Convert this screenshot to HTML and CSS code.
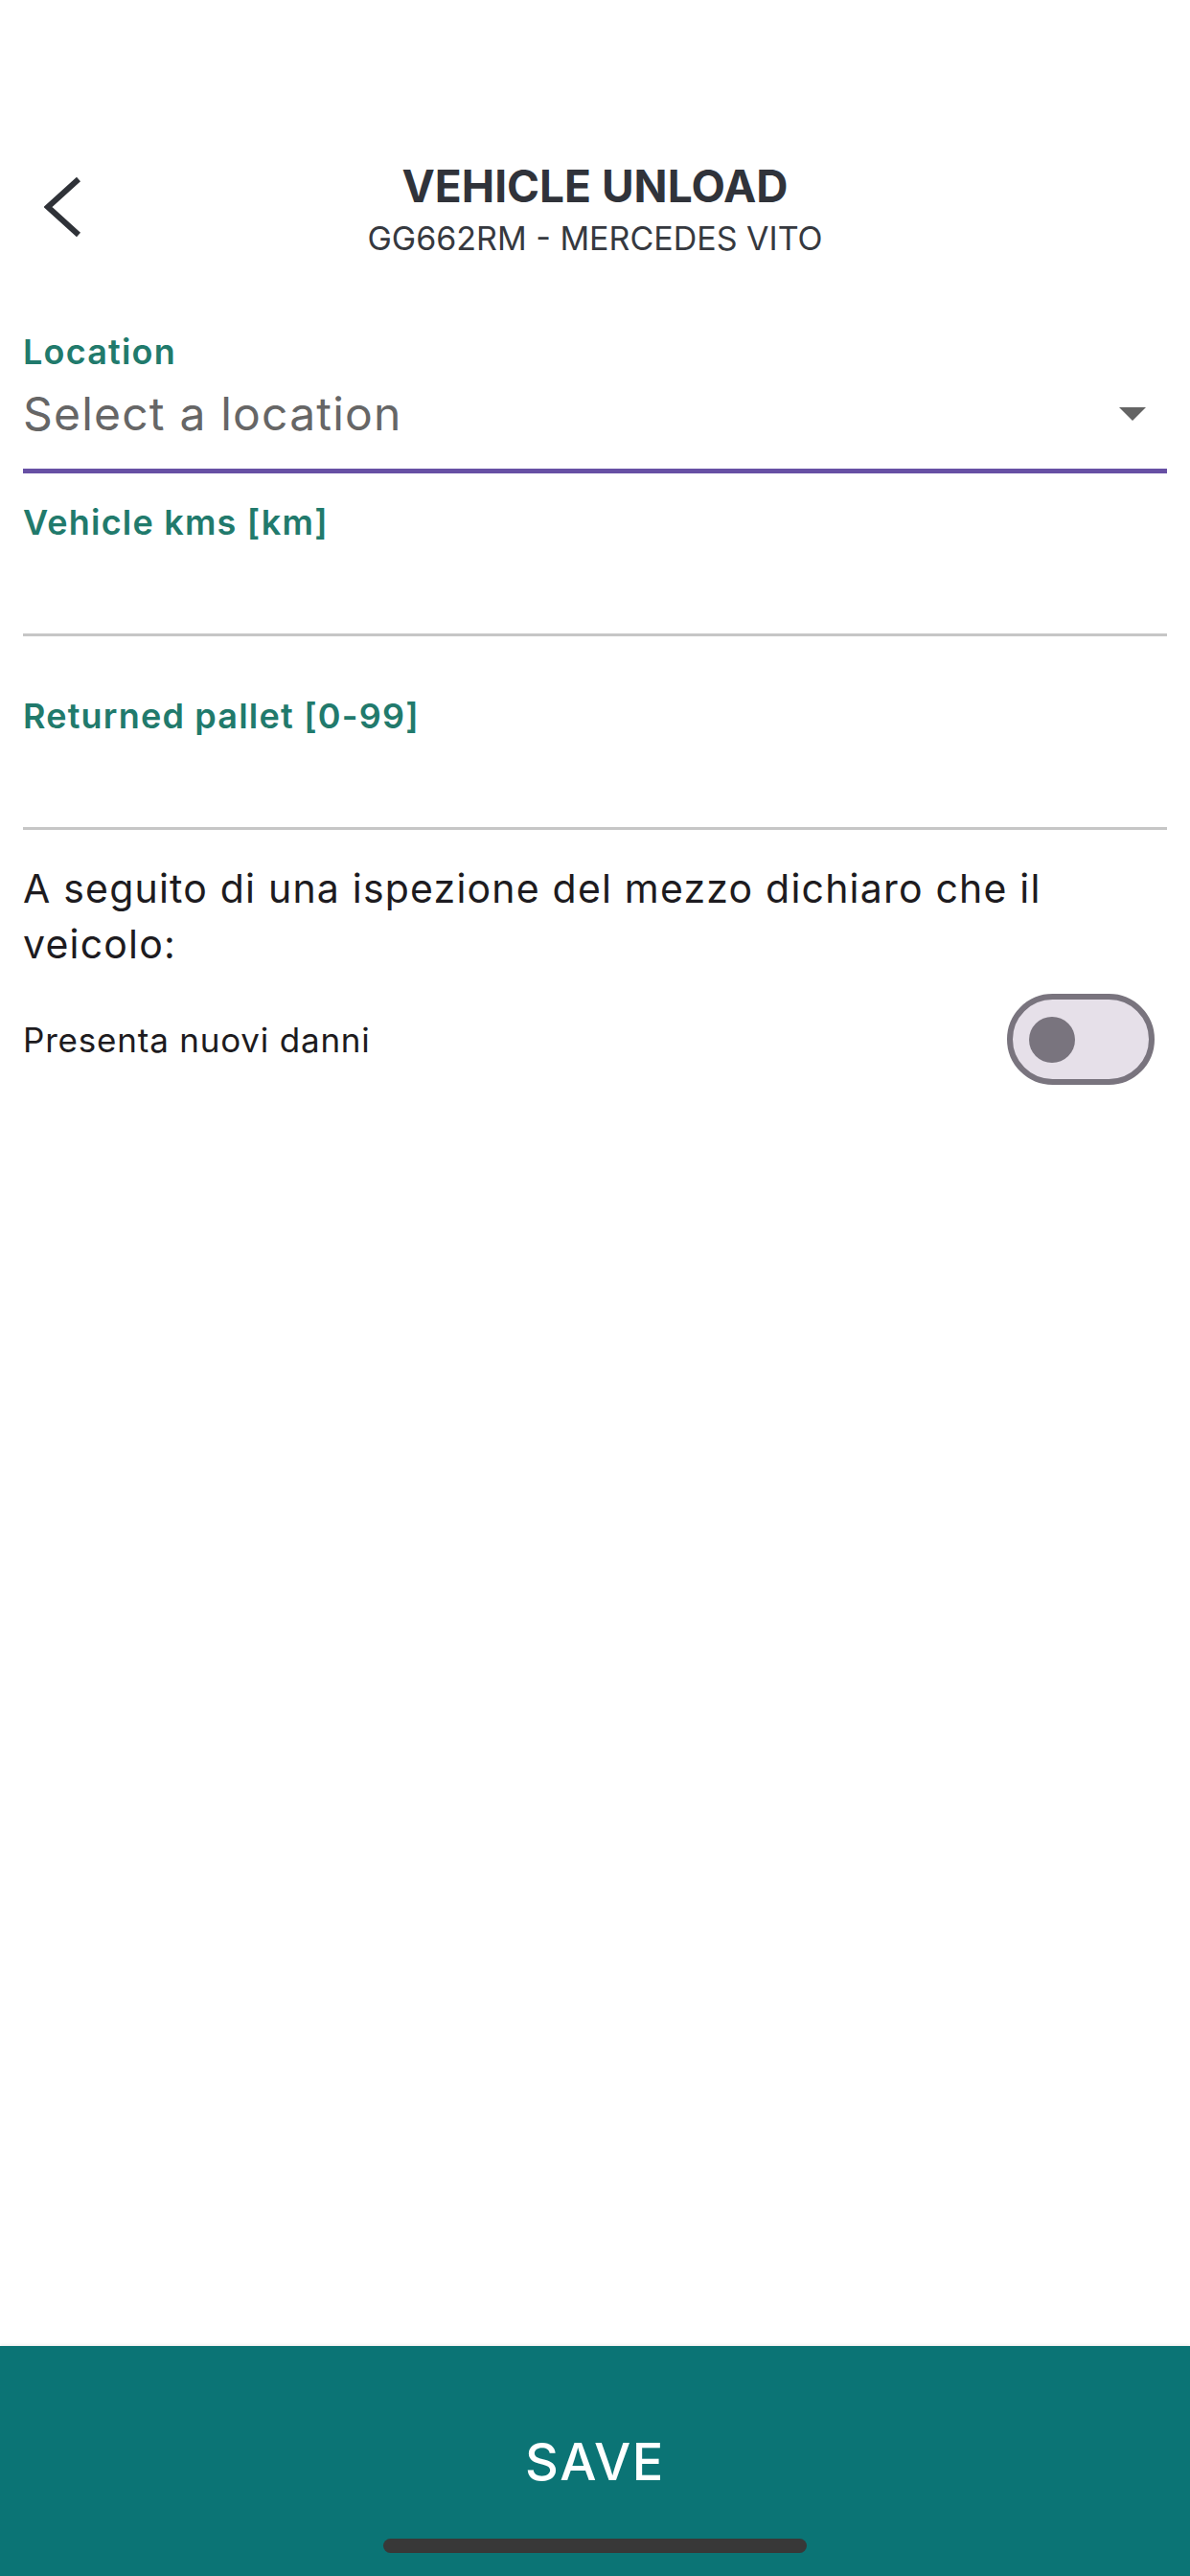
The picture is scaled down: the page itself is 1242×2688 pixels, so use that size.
FILE: index.html
```html
<!DOCTYPE html>
<html lang="it">
<head>
    <meta charset="UTF-8">
    <meta name="viewport" content="width=device-width, initial-scale=1.0">
    <title>Vehicle Unload</title>
    <link rel="stylesheet" href="styles.css">
</head>
<body>
    <header class="header">
        <div class="back">
            <svg width="40" height="64" viewBox="0 0 40 64">
                <path d="M36 3 L4 32 L36 61" fill="none" stroke="#2f3238" stroke-width="6"/>
            </svg>
        </div>
        <div class="titles">
            <h1>VEHICLE UNLOAD</h1>
            <p class="subtitle">GG662RM - MERCEDES VITO</p>
        </div>
        <div></div>
    </header>

    <main class="form">
        <div class="field field-location">
            <label class="field-label">Location</label>
            <div class="select-row">
                <span class="placeholder">Select a location</span>
                <svg class="caret" width="28" height="14" viewBox="0 0 28 14">
                    <path d="M0 0 L28 0 L14 14 Z" fill="#646464"/>
                </svg>
            </div>
        </div>

        <div class="field field-kms">
            <label class="field-label">Vehicle kms [km]</label>
            <div class="input-space"></div>
        </div>

        <div class="field field-pallet">
            <label class="field-label">Returned pallet [0-99]</label>
            <div class="input-space"></div>
        </div>

        <p class="declaration">A seguito di una ispezione del mezzo dichiaro che il veicolo:</p>

        <div class="switch-row">
            <span>Presenta nuovi danni</span>
            <div class="switch">
                <div class="switch-thumb"></div>
            </div>
        </div>
    </main>

    <footer class="save-bar">
        <button class="save-btn">SAVE</button>
        <div class="home-indicator"></div>
    </footer>
</body>
</html>
```

FILE: styles.css
```css
body {
    margin: 0;
    width: 1242px;
    height: 2688px;
    display: flex;
    flex-direction: column;
    background-color: #fff;
    font-family: Inter, "Noto Sans", sans-serif;
    overflow: hidden;
}

/* Header */
.header {
    display: grid;
    grid-template-columns: 1fr auto 1fr;
    padding-top: 168px;
}

.back {
    padding-left: 46px;
    padding-top: 16px;
}

.titles {
    text-align: center;
}

h1 {
    margin: 0;
    font-size: 46px;
    line-height: 52px;
    font-weight: 700;
    color: #30333a;
}

.subtitle {
    margin: 9px 0 0;
    font-size: 34px;
    line-height: 40px;
    color: #36393f;
}

/* Form */
.form {
    flex: 1;
    padding: 0 24px;
}

.field-label {
    display: block;
    font-size: 36px;
    line-height: 40px;
    font-weight: 600;
    letter-spacing: 1.2px;
    color: #217a6c;
}

.field-location {
    margin-top: 78px;
    border-bottom: 5px solid #6750a4;
}

.select-row {
    display: flex;
    justify-content: space-between;
    align-items: center;
    margin-top: 17px;
    padding-bottom: 29px;
}

.placeholder {
    font-size: 48px;
    line-height: 56px;
    color: #666;
    letter-spacing: 1.2px;
}

.caret {
    margin-right: 22px;
}

.field-kms,
.field-pallet {
    border-bottom: 3px solid #c6c6c6;
}

.field-kms {
    margin-top: 31px;
}

.field-pallet {
    margin-top: 63px;
}

.input-space {
    height: 96px;
}

.declaration {
    margin: 32px 0 0;
    font-size: 41px;
    line-height: 58px;
    letter-spacing: 1.2px;
    color: #1d1b20;
}

.switch-row {
    display: flex;
    justify-content: space-between;
    align-items: center;
    margin-top: 23px;
    font-size: 35px;
    letter-spacing: 0.8px;
    color: #1d1b20;
}

.switch {
    width: 154px;
    height: 95px;
    margin-right: 13px;
    box-sizing: border-box;
    border: 6px solid #79747e;
    border-radius: 48px;
    background-color: #e6e0e9;
    display: flex;
    align-items: center;
    padding-left: 17px;
}

.switch-thumb {
    width: 48px;
    height: 48px;
    border-radius: 50%;
    background-color: #79747e;
}

/* Bottom bar */
.save-bar {
    height: 240px;
    background-color: #0b7475;
    box-shadow: 0 -1px 3px rgba(0, 0, 0, 0.08);
    display: flex;
    flex-direction: column;
    align-items: center;
    padding-top: 89px;
    box-sizing: border-box;
}

.save-btn {
    background: none;
    border: none;
    padding: 0;
    font-family: Inter, "Noto Sans", sans-serif;
    font-size: 54px;
    line-height: 64px;
    font-weight: 500;
    letter-spacing: 1.5px;
    color: #fff;
}

.home-indicator {
    margin-top: 48px;
    width: 442px;
    height: 15px;
    border-radius: 8px;
    background-color: #383838;
}
```
